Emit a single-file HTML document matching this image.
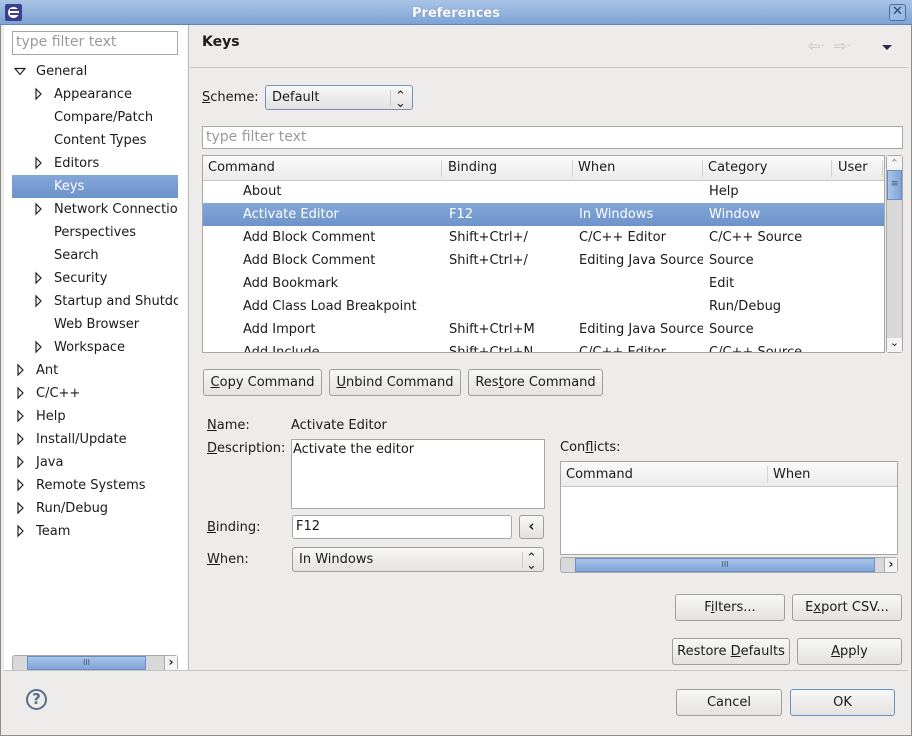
<!DOCTYPE html>
<html><head><meta charset="utf-8"><style>
*{box-sizing:border-box;margin:0;padding:0}
body{width:912px;height:736px;background:#edeceb;font:13px/19px "DejaVu Sans","Liberation Sans",sans-serif;color:#1a1a1a;position:relative;overflow:hidden}
.a{position:absolute;white-space:nowrap}
.title{left:0;top:0;width:912px;height:25px;background:linear-gradient(#a9c4e6,#7ea3d4);border-bottom:1px solid #5f86bd}
.title span{position:absolute;left:0;right:0;top:4px;text-align:center;color:#fff;font-weight:bold;font-size:13px;text-shadow:0 0 1px #4a6a9a}
.frame{left:0;top:25px;width:912px;height:711px;border:1px solid #8c8c8c;border-top:none}
.left{left:4px;top:25px;width:185px;height:646px;background:#fff;border-right:1px solid #b8b8b8}
.inp{background:#fff;border:1px solid #a7a7a7}
.ph{color:#9a9a9a}
.btn{border:1px solid #9f9f9f;border-radius:3px;background:linear-gradient(#f7f7f6,#e3e2e0);text-align:center;line-height:25px}
.tri{position:absolute;width:0;height:0}
.sel{background:linear-gradient(#84a7d8,#6d93cb);color:#fff}
u{text-decoration:underline}
.hdr{background:linear-gradient(#fbfbfb,#ecebea);border-bottom:1px solid #c9c9c9}
.sep{position:absolute;top:4px;width:1px;height:17px;background:#d3d3d3}
</style></head><body>
<div class="a title"><span>Preferences</span>
<div style="position:absolute;left:5px;top:4px;width:17px;height:17px;background:#3b3f8f;border-radius:2px"><div style="position:absolute;left:3px;top:3px;width:11px;height:11px;border-radius:50%;background:#fff"></div><div style="position:absolute;left:5px;top:5px;width:9px;height:2px;background:#3b3f8f"></div><div style="position:absolute;left:5px;top:9px;width:9px;height:2px;background:#3b3f8f"></div></div>
<div style="position:absolute;left:889px;top:4px;width:17px;height:17px;border:1px solid #4f6f9f;border-radius:3px;background:#9dbbe2;color:#24476f;font-size:13px;line-height:14px;text-align:center">✕</div>
</div>
<div class="a frame"></div>
<div class="a left"></div>
<div class="a inp ph" style="left:12px;top:31px;width:166px;height:24px;padding:1px 3px;font-size:14px">type filter text</div>

<div class="a sel" style="left:12px;top:175px;width:166px;height:23px"></div>
<div class="a" style="left:36px;top:62px">General</div>
<div class="a" style="left:54px;top:85px">Appearance</div>
<div class="a" style="left:54px;top:108px">Compare/Patch</div>
<div class="a" style="left:54px;top:131px">Content Types</div>
<div class="a" style="left:54px;top:154px">Editors</div>
<div class="a" style="left:54px;top:177px;color:#fff">Keys</div>
<div class="a" style="left:54px;top:200px;width:124px;overflow:hidden">Network Connections</div>
<div class="a" style="left:54px;top:223px">Perspectives</div>
<div class="a" style="left:54px;top:246px">Search</div>
<div class="a" style="left:54px;top:269px">Security</div>
<div class="a" style="left:54px;top:292px;width:124px;overflow:hidden">Startup and Shutdown</div>
<div class="a" style="left:54px;top:315px">Web Browser</div>
<div class="a" style="left:54px;top:338px">Workspace</div>
<div class="a" style="left:36px;top:361px">Ant</div>
<div class="a" style="left:36px;top:384px">C/C++</div>
<div class="a" style="left:36px;top:407px">Help</div>
<div class="a" style="left:36px;top:430px">Install/Update</div>
<div class="a" style="left:36px;top:453px">Java</div>
<div class="a" style="left:36px;top:476px">Remote Systems</div>
<div class="a" style="left:36px;top:499px">Run/Debug</div>
<div class="a" style="left:36px;top:522px">Team</div>
<svg class="a" style="left:0;top:0" width="60" height="560">
<g fill="none" stroke="#222" stroke-width="1.2">
<path d="M15 68.5h10l-5 6z"/>
<path d="M36 89v10l5-5z"/><path d="M36 158v10l5-5z"/><path d="M36 204v10l5-5z"/><path d="M36 273v10l5-5z"/><path d="M36 296v10l5-5z"/><path d="M36 342v10l5-5z"/>
<path d="M18 365v10l5-5z"/><path d="M18 388v10l5-5z"/><path d="M18 411v10l5-5z"/><path d="M18 434v10l5-5z"/><path d="M18 457v10l5-5z"/><path d="M18 480v10l5-5z"/><path d="M18 503v10l5-5z"/><path d="M18 526v10l5-5z"/>
</g></svg>
<div class="a" style="left:12px;top:655px;width:166px;height:16px;background:#d8d8d8;border:1px solid #aaa;border-radius:3px"></div>
<div class="a" style="left:27px;top:656px;width:119px;height:14px;background:linear-gradient(#a9c5ea,#7fa4d6);border:1px solid #6a8fc4;font-size:8px;color:#456;text-align:center;line-height:12px">III</div>
<div class="a" style="left:164px;top:656px;width:13px;height:14px;background:#f4f4f4;border-left:1px solid #aaa;font-size:12px;font-weight:bold;text-align:center;line-height:13px">›</div>

<div class="a" style="left:202px;top:33px;font-weight:bold;font-size:14px">Keys</div>
<div class="a" style="left:808px;top:37px;color:#c4c4c4;font-size:15px">⇦<span style="font-size:8px">˅</span> &nbsp;⇨<span style="font-size:8px">˅</span></div>
<div class="a tri" style="left:882px;top:45px;border-left:5px solid transparent;border-right:5px solid transparent;border-top:5px solid #2a2a55"></div>
<div class="a" style="left:190px;top:67px;width:718px;height:1px;background:#c4c4c4"></div>

<div class="a" style="left:202px;top:88px"><u>S</u>cheme:</div>
<div class="a btn" style="left:265px;top:85px;width:148px;height:25px;border-color:#7791b8;text-align:left;padding-left:6px;line-height:23px">Default<span style="position:absolute;left:124px;top:4px;width:1px;height:16px;background:#ccc"></span><span style="position:absolute;left:129px;top:-1px;font-size:13px">⌃</span><span style="position:absolute;left:129px;top:6px;font-size:13px">⌄</span></div>
<div class="a inp ph" style="left:202px;top:126px;width:701px;height:23px;padding:1px 3px;font-size:14px">type filter text</div>

<div class="a" style="left:202px;top:155px;width:683px;height:198px;background:#fff;border:1px solid #a7a7a7;overflow:hidden">
<div class="hdr" style="position:absolute;left:0;top:0;width:683px;height:25px"></div>
<div class="sep" style="left:238px"></div><div class="sep" style="left:369px"></div><div class="sep" style="left:499px"></div><div class="sep" style="left:628px"></div><div class="sep" style="left:679px"></div>
<div class="sel" style="position:absolute;left:0;top:47px;width:683px;height:23px"></div>
</div>
<div class="a" style="left:208px;top:158px">Command</div><div class="a" style="left:448px;top:158px">Binding</div><div class="a" style="left:578px;top:158px">When</div><div class="a" style="left:708px;top:158px">Category</div><div class="a" style="left:838px;top:158px">User</div>
<div class="a" style="left:243px;top:182px">About</div><div class="a" style="left:709px;top:182px">Help</div>
<div class="a" style="left:243px;top:205px;color:#fff">Activate Editor</div><div class="a" style="left:449px;top:205px;color:#fff">F12</div><div class="a" style="left:579px;top:205px;color:#fff">In Windows</div><div class="a" style="left:709px;top:205px;color:#fff">Window</div>
<div class="a" style="left:243px;top:228px">Add Block Comment</div><div class="a" style="left:449px;top:228px">Shift+Ctrl+/</div><div class="a" style="left:579px;top:228px">C/C++ Editor</div><div class="a" style="left:709px;top:228px">C/C++ Source</div>
<div class="a" style="left:243px;top:251px">Add Block Comment</div><div class="a" style="left:449px;top:251px">Shift+Ctrl+/</div><div class="a" style="left:579px;top:251px;width:124px;overflow:hidden">Editing Java Source</div><div class="a" style="left:709px;top:251px">Source</div>
<div class="a" style="left:243px;top:274px">Add Bookmark</div><div class="a" style="left:709px;top:274px">Edit</div>
<div class="a" style="left:243px;top:297px">Add Class Load Breakpoint</div><div class="a" style="left:709px;top:297px">Run/Debug</div>
<div class="a" style="left:243px;top:320px">Add Import</div><div class="a" style="left:449px;top:320px">Shift+Ctrl+M</div><div class="a" style="left:579px;top:320px;width:124px;overflow:hidden">Editing Java Source</div><div class="a" style="left:709px;top:320px">Source</div>
<div class="a" style="left:203px;top:336px;width:681px;height:16px;overflow:hidden"><div style="position:absolute;left:40px;top:7px">Add Include</div><div style="position:absolute;left:246px;top:7px">Shift+Ctrl+N</div><div style="position:absolute;left:376px;top:7px">C/C++ Editor</div><div style="position:absolute;left:506px;top:7px">C/C++ Source</div></div>
<div class="a" style="left:886px;top:155px;width:17px;height:198px;background:#d8d8d8;border:1px solid #aaa;border-radius:3px"></div>
<div class="a" style="left:887px;top:156px;width:15px;height:14px;background:#f4f4f4;font-size:11px;text-align:center;color:#888;line-height:16px">⌃</div>
<div class="a" style="left:887px;top:170px;width:15px;height:30px;background:linear-gradient(90deg,#a9c5ea,#7fa4d6);border:1px solid #6a8fc4;font-size:9px;text-align:center;line-height:26px;color:#456">≡</div>
<div class="a" style="left:887px;top:338px;width:15px;height:14px;background:#f4f4f4;font-size:11px;text-align:center;line-height:10px">⌄</div>

<div class="a btn" style="left:203px;top:369px;width:119px;height:27px"><u>C</u>opy Command</div>
<div class="a btn" style="left:329px;top:369px;width:132px;height:27px"><u>U</u>nbind Command</div>
<div class="a btn" style="left:468px;top:369px;width:135px;height:27px">Res<u>t</u>ore Command</div>

<div class="a" style="left:207px;top:416px"><u>N</u>ame:</div>
<div class="a" style="left:291px;top:416px">Activate Editor</div>
<div class="a" style="left:207px;top:439px"><u>D</u>escription:</div>
<div class="a inp" style="left:291px;top:439px;width:254px;height:70px;padding:0 1px">Activate the editor</div>
<div class="a" style="left:207px;top:518px"><u>B</u>inding:</div>
<div class="a inp" style="left:292px;top:515px;width:220px;height:24px;border-radius:3px;padding:1px 3px">F12</div>
<div class="a btn" style="left:519px;top:515px;width:25px;height:24px;font-weight:bold;font-size:15px;line-height:21px">‹</div>
<div class="a" style="left:207px;top:550px"><u>W</u>hen:</div>
<div class="a btn" style="left:292px;top:547px;width:252px;height:25px;text-align:left;padding-left:6px;line-height:23px">In Windows<span style="position:absolute;left:229px;top:4px;width:1px;height:16px;background:#ccc"></span><span style="position:absolute;left:233px;top:-1px;font-size:13px">⌃</span><span style="position:absolute;left:233px;top:6px;font-size:13px">⌄</span></div>

<div class="a" style="left:560px;top:438px">Con<u>f</u>licts:</div>
<div class="a" style="left:560px;top:461px;width:338px;height:94px;background:#fff;border:1px solid #a7a7a7"><div class="hdr" style="height:25px"></div><div class="sep" style="left:206px"></div></div>
<div class="a" style="left:566px;top:465px">Command</div><div class="a" style="left:773px;top:465px">When</div>
<div class="a" style="left:560px;top:557px;width:338px;height:16px;background:#d8d8d8;border:1px solid #aaa;border-radius:3px"></div>
<div class="a" style="left:575px;top:558px;width:300px;height:14px;background:linear-gradient(#a9c5ea,#7fa4d6);border:1px solid #6a8fc4;font-size:8px;color:#456;text-align:center;line-height:12px">III</div>
<div class="a" style="left:884px;top:558px;width:13px;height:14px;background:#f4f4f4;border-left:1px solid #aaa;font-size:12px;font-weight:bold;text-align:center;line-height:13px">›</div>

<div class="a btn" style="left:675px;top:594px;width:110px;height:27px">F<u>i</u>lters...</div>
<div class="a btn" style="left:792px;top:594px;width:110px;height:27px">E<u>x</u>port CSV...</div>
<div class="a btn" style="left:672px;top:638px;width:118px;height:27px">Restore <u>D</u>efaults</div>
<div class="a btn" style="left:797px;top:638px;width:105px;height:27px"><u>A</u>pply</div>

<div class="a" style="left:4px;top:670px;width:904px;height:1px;background:#c4c4c4"></div>
<div class="a" style="left:26px;top:689px;width:21px;height:21px;border:2px solid #5a6e8c;border-radius:50%;color:#5a6e8c;font-weight:bold;font-size:15px;text-align:center;line-height:17px">?</div>
<div class="a btn" style="left:676px;top:689px;width:106px;height:27px">Cancel</div>
<div class="a btn" style="left:790px;top:689px;width:105px;height:27px;border-color:#6a8fc4">OK</div>
</body></html>
